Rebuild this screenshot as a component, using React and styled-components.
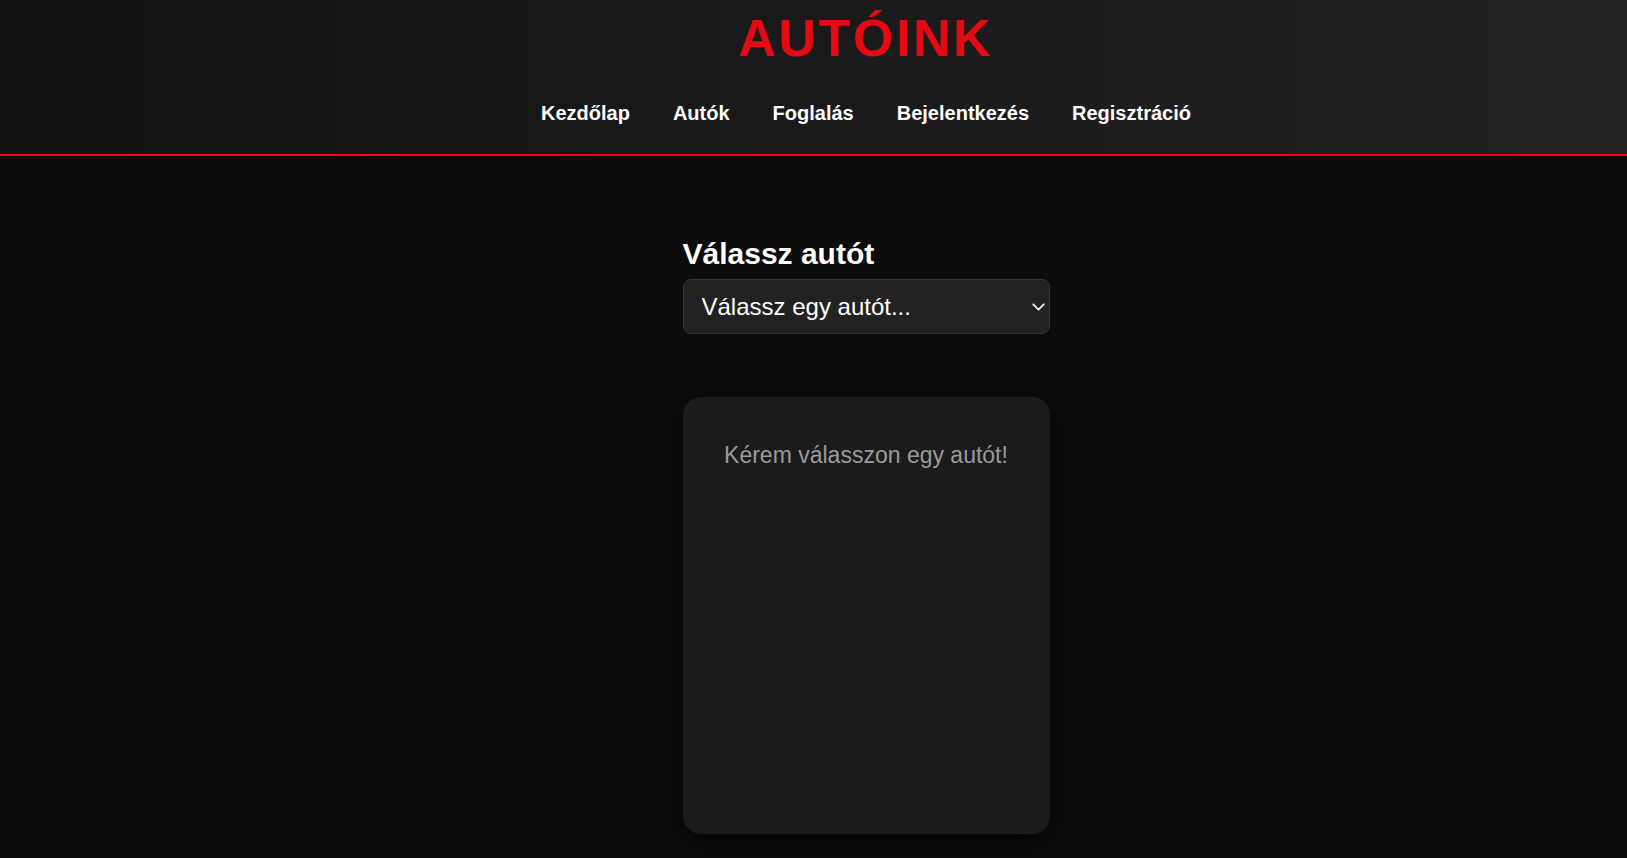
import React, { useState } from "react";
import styled, { createGlobalStyle } from "styled-components";
import { ChevronDown } from "lucide-react";

const links = ["Kezdőlap", "Autók", "Foglalás", "Bejelentkezés", "Regisztráció"];

const App = () => {
  const [car, setCar] = useState("");

  return (
    <Container>
      <GlobalStyle />
      <Header>
        <HeaderInner>
          <Logo>AUTÓINK</Logo>
          <Nav>
            {links.map((l) => (
              <NavLink key={l} href="#">
                {l}
              </NavLink>
            ))}
          </Nav>
        </HeaderInner>
      </Header>
      <Main>
        <Wrapper>
          <Title>Válassz autót</Title>
          <SelectHold>
            <Select value={car} onChange={(e) => setCar(e.target.value)}>
              <option value="">Válassz egy autót...</option>
            </Select>
            <Arrow>
              <ChevronDown size={21} strokeWidth={2.2} />
            </Arrow>
          </SelectHold>
          <Card>
            <Empty>Kérem válasszon egy autót!</Empty>
          </Card>
        </Wrapper>
      </Main>
    </Container>
  );
};

export default App;

const GlobalStyle = createGlobalStyle`
  * {
    box-sizing: border-box;
  }
  body {
    margin: 0;
    background-color: #0c0c0c;
    font-family: "Liberation Sans", Arial, sans-serif;
    color: white;
  }
`;

const Container = styled.div`
  min-height: 100vh;
  background-color: #0c0c0c;
  overflow: hidden;
`;

const Header = styled.header`
  background: linear-gradient(90deg, #111111, #232323);
  border-bottom: 2px solid #e50914;
`;

const HeaderInner = styled.div`
  padding: 8px 0 29px 105px;
  display: flex;
  flex-direction: column;
  align-items: center;
`;

const Logo = styled.h1`
  margin: 0;
  font-size: 52px;
  font-weight: 700;
  letter-spacing: 2.6px;
  color: #e50914;
  line-height: 60px;
`;

const Nav = styled.nav`
  margin-top: 34px;
  display: flex;
  gap: 43px;
`;

const NavLink = styled.a`
  color: white;
  text-decoration: none;
  font-weight: 700;
  font-size: 20px;
  line-height: 23px;
`;

const Main = styled.main`
  padding: 80px 0 0 105px;
  display: flex;
  justify-content: center;
`;

const Wrapper = styled.div`
  width: 367px;
  display: flex;
  flex-direction: column;
`;

const Title = styled.h2`
  margin: 0 0 8px;
  font-size: 30px;
  font-weight: 700;
  line-height: 35px;
`;

const SelectHold = styled.div`
  position: relative;
`;

const Select = styled.select`
  appearance: none;
  width: 100%;
  height: 55px;
  padding: 0 40px 0 18px;
  background-color: #222222;
  border: 1px solid #353535;
  border-radius: 8px;
  color: white;
  font-family: "Liberation Sans", Arial, sans-serif;
  font-size: 24px;
  outline: none;
`;

const Arrow = styled.span`
  position: absolute;
  right: 1px;
  top: 50%;
  transform: translateY(-50%);
  display: flex;
  color: #e8e8e8;
  pointer-events: none;
`;

const Card = styled.div`
  margin-top: 63px;
  height: 437px;
  background-color: #1b1b1b;
  border-radius: 18px;
  box-shadow: 0 8px 28px rgba(0, 0, 0, 0.6);
  padding-top: 45px;
  display: flex;
  justify-content: center;
  align-items: flex-start;
`;

const Empty = styled.p`
  margin: 0;
  font-size: 23px;
  color: #9a9a9a;
`;
